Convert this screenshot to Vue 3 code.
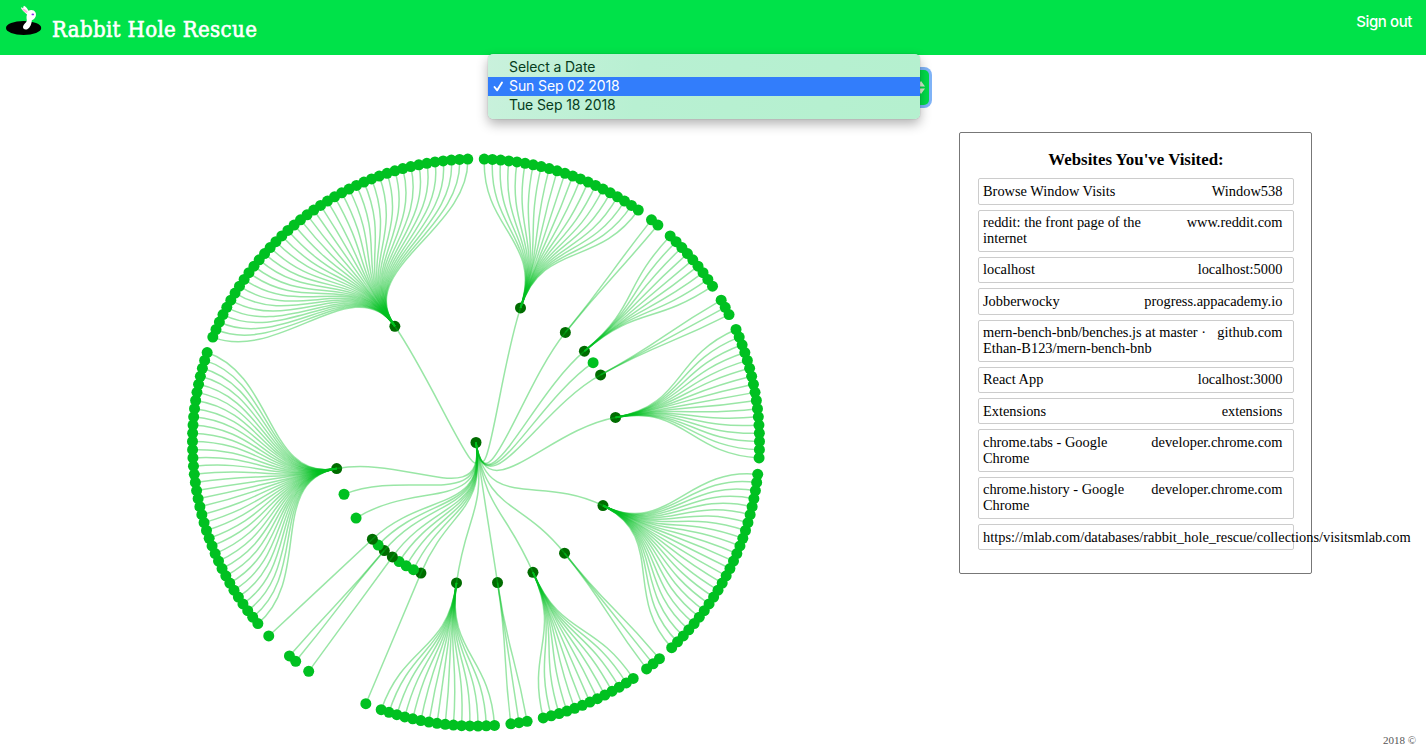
<script setup>
const visits = [
  ['Browse Window Visits', 'Window538'],
  ['reddit: the front page of the internet', 'www.reddit.com'],
  ['localhost', 'localhost:5000'],
  ['Jobberwocky', 'progress.appacademy.io'],
  ['mern-bench-bnb/benches.js at master · Ethan-B123/mern-bench-bnb', 'github.com'],
  ['React App', 'localhost:3000'],
  ['Extensions', 'extensions'],
  ['chrome.tabs - Google Chrome', 'developer.chrome.com'],
  ['chrome.history - Google Chrome', 'developer.chrome.com'],
  ['https://mlab.com/databases/rabbit_hole_rescue/collections/visits', 'mlab.com'],
]

// Radial tree: [slot of first child, number of children]; zero children marks a lone page.
const groups = [
  [1, 21], [23, 2], [26, 9], [33.5, 0], [36, 3], [40, 17], [58, 25], [84, 3],
  [88, 13], [102, 3], [106, 15], [122, 1], [124, 0], [126, 0], [128, 0], [130, 1],
  [132, 2], [134.5, 0], [136.5, 1], [143, 0], [149.5, 0], [138.5, 36], [175.5, 41],
]
const SLOTS = 216.5
const OUTER = 283.5
const INNER = OUTER / 2
const ROOT_SLOT = 103.25

function polar(slot, r) {
  const a = (slot / SLOTS) * 2 * Math.PI - Math.PI / 2
  return [r * Math.cos(a), r * Math.sin(a)]
}
function link(s0, r0, s1, r1) {
  const m = (r0 + r1) / 2
  const f = (p) => p.map((v) => v.toFixed(2)).join(',')
  return `M${f(polar(s0, r0))}C${f(polar(s0, m))} ${f(polar(s1, m))} ${f(polar(s1, r1))}`
}

const inner = []
const outer = []
const links = []
for (const [start, count] of groups) {
  const mid = count ? start + (count - 1) / 2 : start
  const [x, y] = polar(mid, INNER)
  inner.push({ x, y, parent: count > 0 })
  links.push(link(ROOT_SLOT, 0, mid, INNER))
  for (let i = 0; i < count; i++) {
    const [cx, cy] = polar(start + i, OUTER)
    outer.push({ x: cx, y: cy, parent: false })
    links.push(link(mid, INNER, start + i, OUTER))
  }
}
const nodes = [{ x: 0, y: 0, parent: true }, ...inner, ...outer]
</script>

<template>
  <div class="page">
    <header class="bar">
      <div class="brand">
        <svg class="logo" width="48" height="40" viewBox="0 0 48 40">
          <ellipse cx="23.6" cy="28" rx="17.6" ry="7" fill="#000" />
          <path d="M27 14.5 C24.5 12.5 21.5 10 20.8 7.6 C21.6 7.2 22.6 7.6 23.2 8.2 C23.2 7.2 23.4 6.3 24 5.8 C26.2 7 27.8 9 28.5 10.8 C31 9.4 34.4 10.2 35.5 12.5 C36.8 15.3 35.3 19.2 31.8 20.3 C31.8 23.5 30.2 27.8 27.3 29.3 C25 30.1 22.8 29.2 23 26.8 C23.3 24.2 26.4 22.8 26.8 20.8 C27 19.2 25.9 17.5 27 14.5Z" fill="#fff" />
          <path d="M22 8.4 C24 8.3 26.6 9.8 27.8 12 L26.6 13 C24.6 12 22.9 10.4 22 8.4Z" fill="#ffb3dc" />
          <ellipse cx="32.8" cy="14.4" rx="1.3" ry="0.9" fill="#8a35e8" />
        </svg>
        <h1>Rabbit Hole Rescue</h1>
      </div>
      <a class="signout">Sign out</a>
    </header>

    <div class="picker">
      <div class="select">
        <svg width="10" height="14" viewBox="0 0 10 14">
          <path d="M5 0 L9 5.5 H1Z M5 13 L9 7.5 H1Z" fill="#d8ecce" />
        </svg>
      </div>
      <ul class="menu">
        <li>Select a Date</li>
        <li class="chosen">
          <svg class="check" width="11" height="11" viewBox="0 0 11 11">
            <path d="M1.5 6 L4.2 9.3 L9 1.5" fill="none" stroke="#fff" stroke-width="1.9" stroke-linecap="round" stroke-linejoin="round" />
          </svg>Sun Sep 02 2018
        </li>
        <li>Tue Sep 18 2018</li>
      </ul>
    </div>

    <main>
      <svg class="tree" width="620" height="600" viewBox="-310 -300.5 620 600">
        <circle v-for="(n, i) in nodes" :key="'n' + i" :cx="n.x" :cy="n.y" r="5.5" :class="n.parent ? 'branch' : 'leaf'" />
        <path v-for="(d, i) in links" :key="'l' + i" :d="d" class="link" />
      </svg>
      <section class="panel">
        <h2>Websites You've Visited:</h2>
        <div v-for="v in visits" :key="v[0]" class="row">
          <span class="name">{{ v[0] }}</span><span class="host">{{ v[1] }}</span>
        </div>
      </section>
    </main>

    <footer>2018 ©</footer>
  </div>
</template>

<style>
body { margin: 0; background: #fff; overflow: hidden; }
</style>

<style scoped>
.page {
  position: relative;
  display: flex;
  flex-direction: column;
  width: 1426px;
  height: 754px;
  overflow: hidden;
  font-family: "Liberation Serif", "Times New Roman", serif;
  color: #000;
}
.bar {
  display: flex;
  justify-content: space-between;
  height: 55px;
  flex: none;
  background: #00e249;
  color: #fff;
}
.brand { display: flex; }
.logo { display: block; }
h1 {
  margin: 16px 0 0 4px;
  font: 400 22px/28px "DejaVu Serif Condensed", "DejaVu Serif", serif;
  font-stretch: condensed;
  letter-spacing: 0.35px;
  white-space: nowrap;
  -webkit-text-stroke: 0.6px #fff;
}
.signout {
  margin: 12px 14px 0 0;
  font: 500 15px/20px Inter, sans-serif;
  letter-spacing: -0.4px;
}
.picker {
  position: relative;
  flex: none;
  height: 77px;
}
.select {
  box-sizing: border-box;
  display: flex;
  align-items: center;
  justify-content: flex-end;
  width: 438px;
  height: 35px;
  margin: 15px 0 0 491px;
  padding-right: 3px;
  border-radius: 5px;
  background: #00dc48;
  box-shadow: 0 0 0 3px #80b4f8;
}
.menu {
  position: absolute;
  left: 488px;
  top: -1px;
  box-sizing: border-box;
  width: 432px;
  height: 65px;
  margin: 0;
  padding: 4px 0;
  list-style: none;
  border-radius: 5px;
  background: linear-gradient(100deg, #c9f1dc 0, #b8f0d2 35%, #b5f0cf 100%);
  box-shadow: 0 0 1px rgba(0, 0, 0, .45), 0 5px 12px rgba(0, 0, 0, .3);
  font: 400 14px/17px Inter, sans-serif;
  letter-spacing: -0.1px;
  color: #053c1c;
}
.menu li {
  position: relative;
  box-sizing: border-box;
  height: 19px;
  padding-left: 21px;
  white-space: nowrap;
}
.menu .chosen { background: #327dfb; color: #fff; }
.check { position: absolute; left: 5px; top: 4px; }
main { display: flex; align-items: flex-start; }
.tree { flex: none; margin: 10px 0 0 166px; }
.branch { fill: #006c00; }
.leaf { fill: #00c121; }
.link { fill: none; stroke: #00c121; stroke-opacity: .4; stroke-width: 1.5px; }
.panel {
  flex: none;
  box-sizing: border-box;
  width: 353px;
  height: 442px;
  margin-left: 173px;
  padding: 17px 17px 0 18px;
  border: 1px solid #777;
  border-radius: 2px;
}
h2 {
  margin: 0 0 9.2px;
  font-size: 16.85px;
  line-height: 19px;
  text-align: center;
}
.row {
  box-sizing: border-box;
  display: flex;
  justify-content: space-between;
  min-height: 26.33px;
  margin-bottom: 5px;
  padding: 3.5px 10.6px 4.83px 4px;
  border: 1px solid #ccc;
  border-radius: 2px;
  font-size: 14.4px;
  line-height: 16px;
}
.host { text-align: right; }
footer {
  position: absolute;
  right: 10px;
  bottom: 7px;
  font-size: 11px;
  line-height: 13px;
  color: #555;
}
</style>
